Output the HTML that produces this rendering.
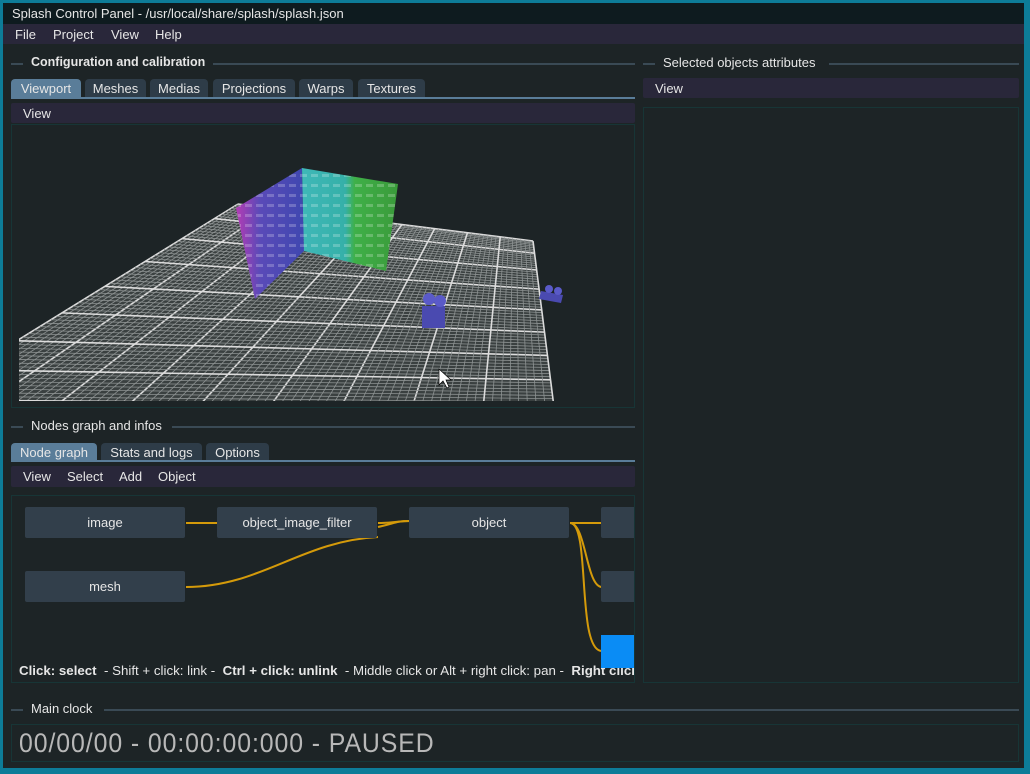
<!DOCTYPE html>
<html><head><meta charset="utf-8"><style>
*{margin:0;padding:0;box-sizing:border-box}
body{width:1030px;height:774px;background:#0d7c98;font-family:"Liberation Sans",sans-serif;font-size:13px;color:#e6e6e6;position:relative;overflow:hidden}
.win{position:absolute;left:3px;top:3px;width:1021px;height:765px;background:#1d2426}
.a{position:absolute}
.title{left:3px;top:3px;width:1021px;height:21px;background:#0e1b1f;padding:3px 0 0 9px}
.menu{left:3px;top:24px;width:1021px;height:20px;background:#29273a}
.bar{background:#29273a;border-radius:2px}
.tab{position:absolute;height:18px;background:#2e3c48;border-radius:4px 4px 0 0;text-align:center;padding-top:2px}
.tab.on{background:#5a7d99}
.hl{height:2px;background:#3a4a55}
.box{border:1px solid #173536}
.node{position:absolute;background:#323f4b;border-radius:2px;text-align:center;padding-top:8px;height:31px}
.hd{font-weight:bold}
</style></head><body>
<div class="win"></div>
<div class="a title">Splash Control Panel - /usr/local/share/splash/splash.json</div>
<div class="a menu"><span class="a" style="left:12px;top:3px">File</span><span class="a" style="left:50px;top:3px">Project</span><span class="a" style="left:108px;top:3px">View</span><span class="a" style="left:152px;top:3px">Help</span></div>

<div class="a hl" style="left:11px;top:63px;width:12px"></div>
<div class="a hd" style="left:31px;top:55px;font-size:12.5px">Configuration and calibration</div>
<div class="a hl" style="left:213px;top:63px;width:422px"></div>
<div class="tab on" style="left:11px;top:79px;width:70px">Viewport</div>
<div class="tab" style="left:85px;top:79px;width:61px">Meshes</div>
<div class="tab" style="left:150px;top:79px;width:58px">Medias</div>
<div class="tab" style="left:213px;top:79px;width:82px">Projections</div>
<div class="tab" style="left:299px;top:79px;width:54px">Warps</div>
<div class="tab" style="left:358px;top:79px;width:67px">Textures</div>
<div class="a" style="left:11px;top:97px;width:624px;height:2px;background:#5a7d99"></div>
<div class="a bar" style="left:11px;top:103px;width:624px;height:20px;padding:3px 0 0 12px">View</div>
<div class="a box" style="left:11px;top:124px;width:624px;height:284px;overflow:hidden">
<svg id="vp" width="624" height="284" viewBox="11 124 624 284" style="position:absolute;left:0;top:0">
<defs>
<linearGradient id="g1" x1="0" x2="1" y1="0" y2="0"><stop offset="0" stop-color="#b43cb4"/><stop offset="0.35" stop-color="#5a4ab8"/><stop offset="1" stop-color="#3f48b0"/></linearGradient>
<linearGradient id="g2" x1="0" x2="1" y1="0" y2="0"><stop offset="0" stop-color="#3fb8b8"/><stop offset="0.45" stop-color="#35b0a8"/><stop offset="0.55" stop-color="#3fb048"/><stop offset="1" stop-color="#3a9a3a"/></linearGradient>
<pattern id="pt" width="11" height="10" patternUnits="userSpaceOnUse"><rect x="2" y="3" width="7" height="3" fill="#ffffff" opacity="0.22"/></pattern>
<clipPath id="cl"><rect x="18" y="124" width="540" height="276"/></clipPath>
</defs>
<g id="grid" clip-path="url(#cl)"></g>
<polygon points="235,207 301,167 303,250 254,298" fill="url(#g1)"/>
<polygon points="235,207 301,167 303,250 254,298" fill="url(#pt)"/>
<polygon points="301,167 397,183 385,270 303,250" fill="url(#g2)"/>
<polygon points="301,167 397,183 385,270 303,250" fill="url(#pt)"/>
<rect x="421" y="305" width="23" height="22" fill="#4a4ab0"/>
<circle cx="428" cy="298" r="6" fill="#5a5ac8"/><circle cx="439" cy="300" r="6" fill="#5a5ac8"/>
<polygon points="540,290 562,294 560,302 538,298" fill="#4a4ab0"/>
<circle cx="548" cy="288" r="4" fill="#5a5ac8"/><circle cx="557" cy="290" r="4" fill="#5a5ac8"/>
<path d="M438,368 L438,384 L442,380 L446,387 L448,386 L445,379 L450,379 Z" fill="#fff" stroke="#000" stroke-width="0.7"/>
</svg></div>

<div class="a hl" style="left:643px;top:63px;width:12px"></div>
<div class="a" style="left:663px;top:55px">Selected objects attributes</div>
<div class="a hl" style="left:829px;top:63px;width:190px"></div>
<div class="a bar" style="left:643px;top:78px;width:376px;height:20px;padding:3px 0 0 12px">View</div>
<div class="a box" style="left:643px;top:107px;width:376px;height:576px"></div>

<div class="a hl" style="left:11px;top:426px;width:12px"></div>
<div class="a" style="left:31px;top:418px">Nodes graph and infos</div>
<div class="a hl" style="left:172px;top:426px;width:463px"></div>
<div class="tab on" style="left:11px;top:443px;width:86px">Node graph</div>
<div class="tab" style="left:101px;top:443px;width:101px">Stats and logs</div>
<div class="tab" style="left:206px;top:443px;width:63px">Options</div>
<div class="a" style="left:11px;top:460px;width:624px;height:2px;background:#5a7d99"></div>
<div class="a bar" style="left:11px;top:466px;width:624px;height:21px">
<span class="a" style="left:12px;top:3px">View</span><span class="a" style="left:56px;top:3px">Select</span><span class="a" style="left:108px;top:3px">Add</span><span class="a" style="left:147px;top:3px">Object</span></div>
<div class="a box" style="left:11px;top:495px;width:624px;height:188px;overflow:hidden">
<svg width="624" height="188" viewBox="11 495 624 188" style="position:absolute;left:0;top:0" fill="none" stroke="#d49a0a" stroke-width="2">
<path d="M185,522 L217,522"/><path d="M377,522 C395,522 395,520 409,520"/><path d="M377,526 C395,522 395,520 409,520"/>
<path d="M185,586 C260,586 300,540 377,536"/>
<path d="M569,522 L601,522"/><path d="M569,522 C585,522 585,586 601,586"/><path d="M569,522 C590,522 575,650 601,650"/>
</svg>
<div class="node" style="left:13px;top:11px;width:160px">image</div>
<div class="node" style="left:205px;top:11px;width:160px">object_image_filter</div>
<div class="node" style="left:397px;top:11px;width:160px">object</div>
<div class="node" style="left:589px;top:11px;width:40px"></div>
<div class="node" style="left:13px;top:75px;width:160px">mesh</div>
<div class="node" style="left:589px;top:75px;width:40px"></div>
<div class="a" style="left:7px;top:167px;white-space:nowrap;font-size:13.3px"><b>Click: select</b> &nbsp;- Shift + click: link - &nbsp;<b>Ctrl + click: unlink</b> &nbsp;- Middle click or Alt + right click: pan - &nbsp;<b>Right click</b></div>
<div class="a" style="left:589px;top:139px;width:40px;height:33px;background:#0a8cf5"></div>
</div>

<div class="a hl" style="left:11px;top:709px;width:12px"></div>
<div class="a" style="left:31px;top:701px">Main clock</div>
<div class="a hl" style="left:104px;top:709px;width:915px"></div>
<div class="a box" style="left:11px;top:724px;width:1008px;height:38px"></div>
<div class="a" style="left:19px;top:728px;font-family:'Liberation Sans Narrow','Liberation Sans',sans-serif;font-size:27px;color:#b8b8b8;letter-spacing:1px;transform-origin:0 0;transform:scaleX(0.92)">00/00/00 - 00:00:00:000 - PAUSED</div>

<script>
(function(){
var g=document.getElementById('grid');var ns='http://www.w3.org/2000/svg';
var FL=[237,203],FR=[532,240],NR=[556,430],NL=[-130,430];
function P(u,v){var tx=FL[0]+(FR[0]-FL[0])*u,ty=FL[1]+(FR[1]-FL[1])*u,bx=NL[0]+(NR[0]-NL[0])*u,by=NL[1]+(NR[1]-NL[1])*u;
var vv=Math.pow(v,1.25);return[tx+(bx-tx)*vv,ty+(by-ty)*vv];}
var bg=document.createElementNS(ns,'polygon');bg.setAttribute('points',[FL,FR,NR,NL].map(function(p){return p.join(',')}).join(' '));bg.setAttribute('fill','#3a4040');g.appendChild(bg);
var N=72;
for(var i=0;i<=N;i++){var t=i/N,maj=i%8==0;
[[P(t,0),P(t,1)],[P(0,t),P(1,t)]].forEach(function(s){var l=document.createElementNS(ns,'line');
l.setAttribute('x1',s[0][0]);l.setAttribute('y1',s[0][1]);l.setAttribute('x2',s[1][0]);l.setAttribute('y2',s[1][1]);
l.setAttribute('stroke',maj?'#dcdcdc':'#8d9292');l.setAttribute('stroke-width',maj?1.6:0.8);g.appendChild(l);});}
})();
</script>
</body></html>
